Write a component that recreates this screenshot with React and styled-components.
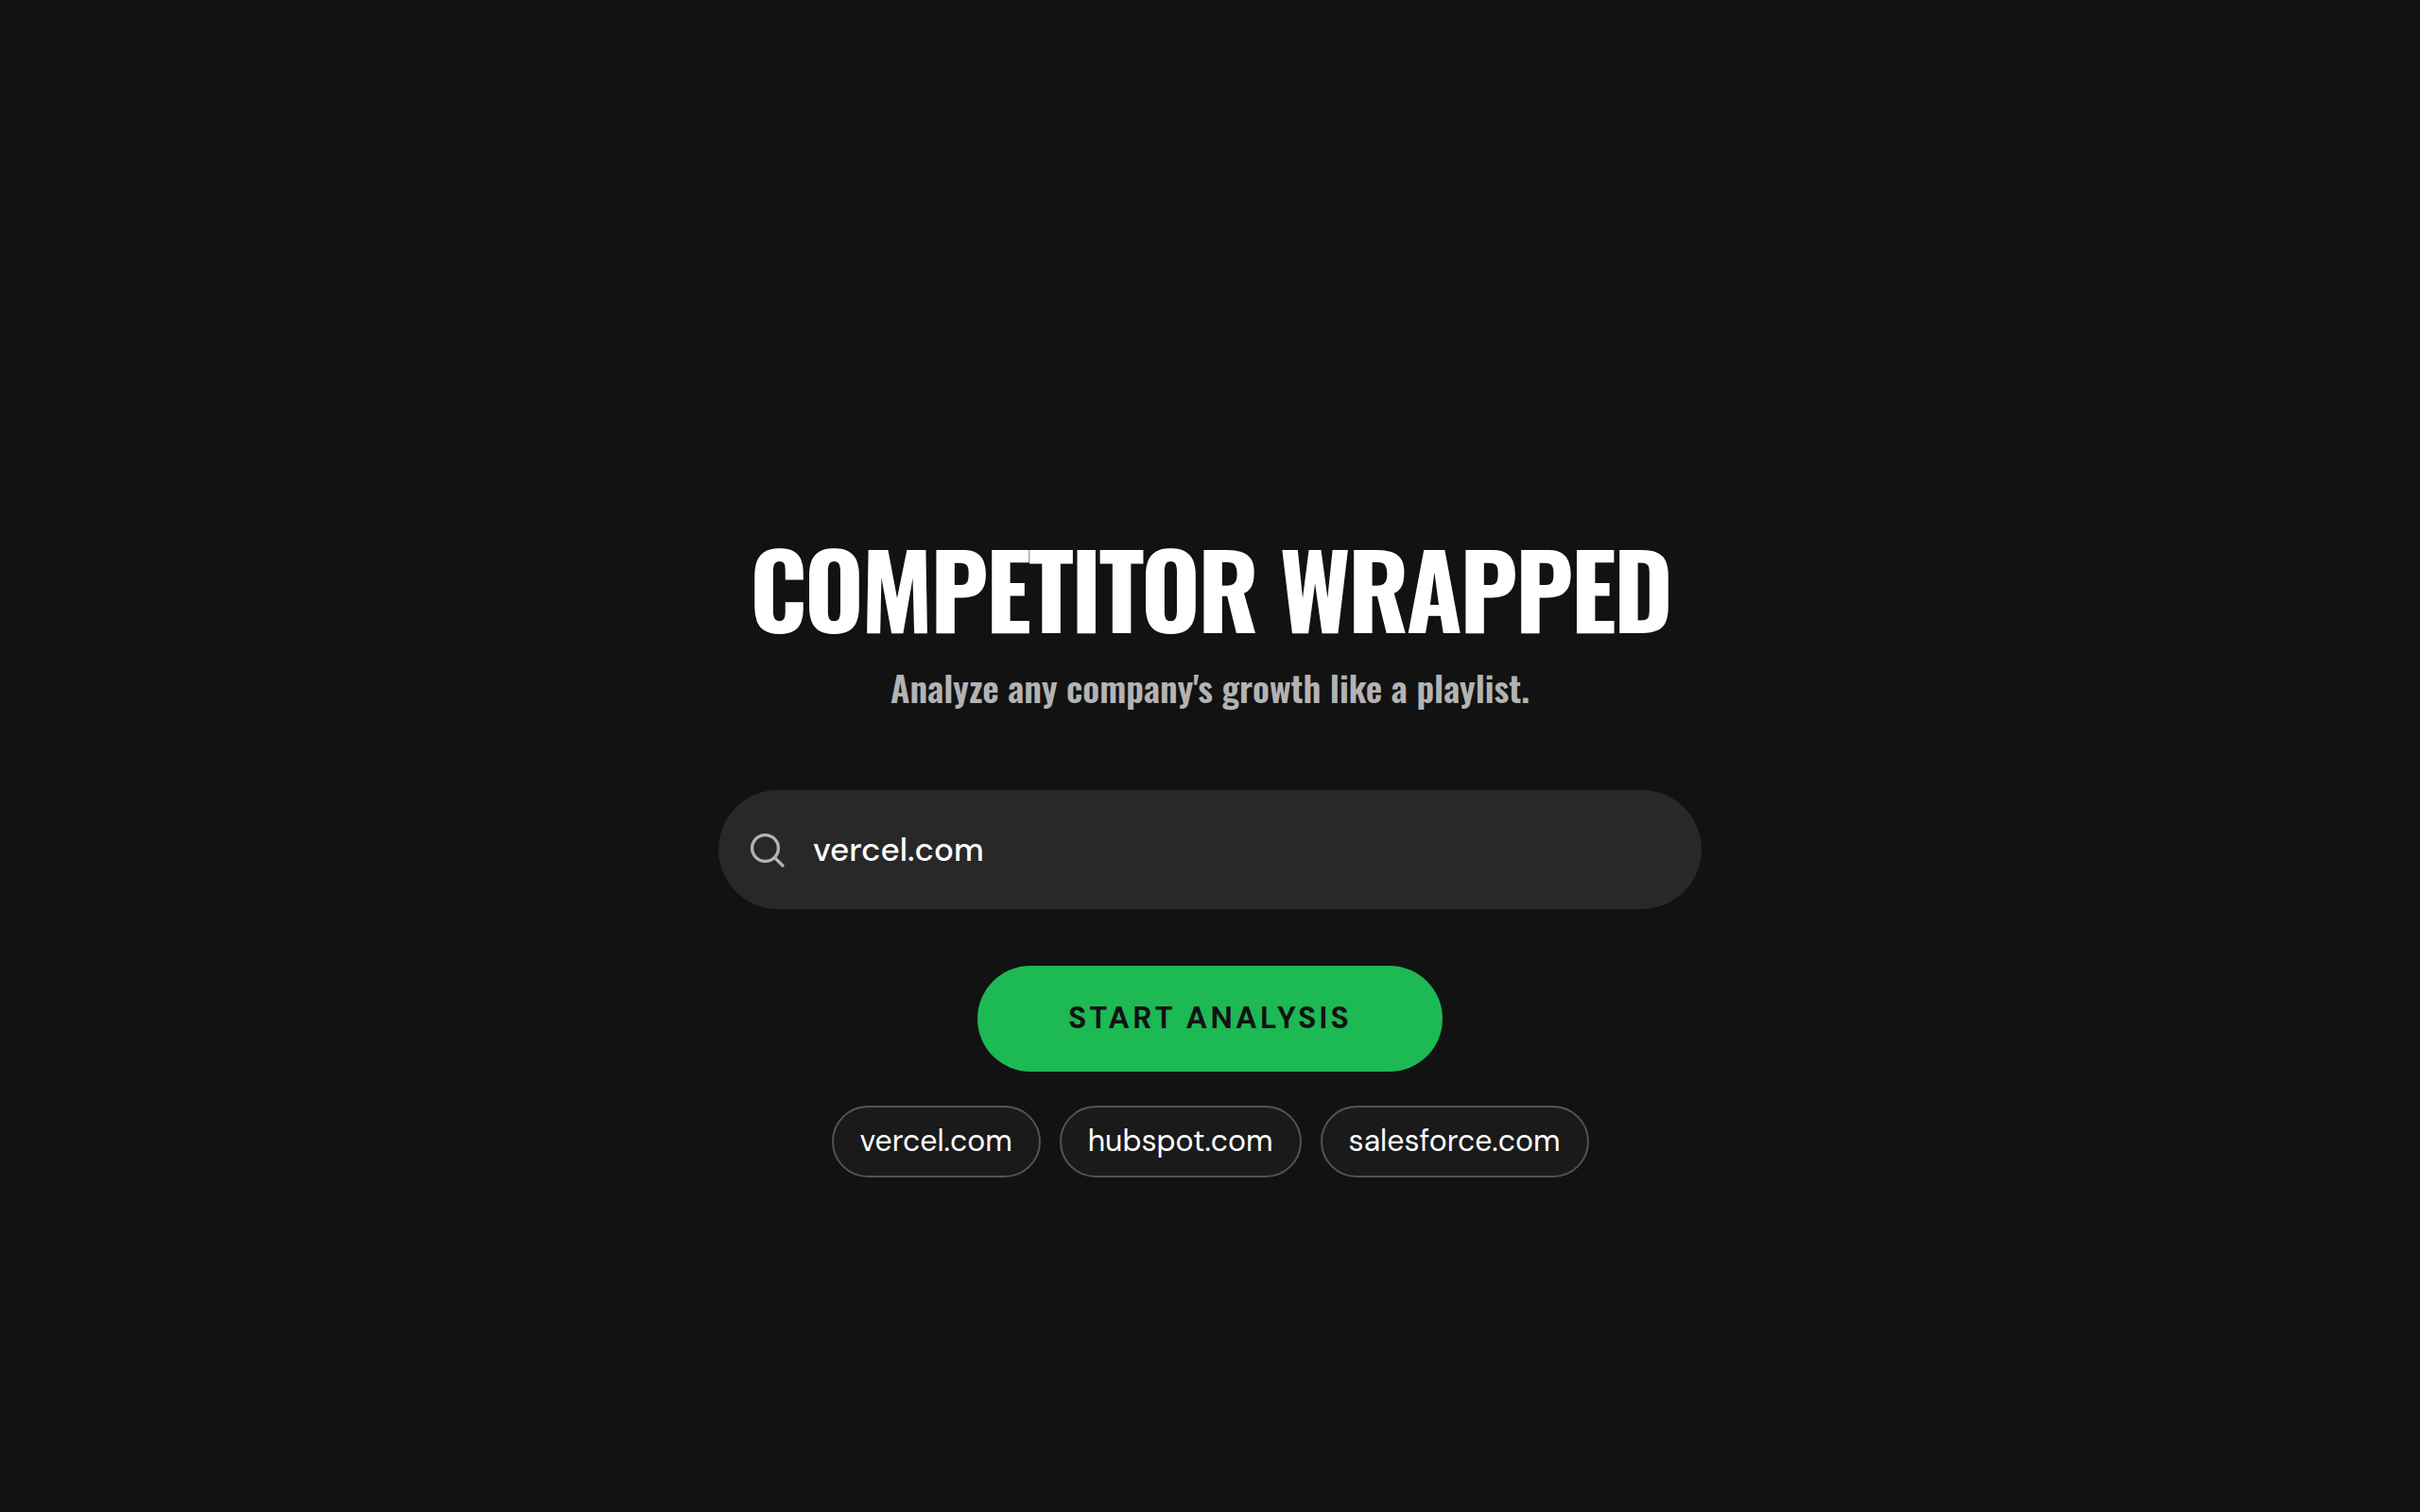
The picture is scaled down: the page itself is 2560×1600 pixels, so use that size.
import React, { useState } from "react";
import styled, { createGlobalStyle } from "styled-components";

const GlobalStyle = createGlobalStyle`
  * {
    box-sizing: border-box;
  }

  body {
    margin: 0;
    background: #121212;
    color: #ffffff;
    font-family: "DM Sans", "Open Sans", sans-serif;
  }
`;

const Page = styled.main`
  display: flex;
  flex-direction: column;
  align-items: center;
  justify-content: center;
  min-height: 100vh;
  padding: 214px 32px 0;
`;

const Title = styled.h1`
  margin: 0;
  font-family: "Oswald", "Roboto Condensed", sans-serif;
  font-size: 108px;
  font-weight: 700;
  line-height: 106px;
  letter-spacing: -3px;
  text-align: center;
  text-transform: uppercase;
`;

const Subtitle = styled.p`
  margin: 24px 0 0;
  color: #b3b3b3;
  font-family: "Oswald", "Roboto Condensed", sans-serif;
  font-size: 38px;
  font-weight: 600;
  line-height: 58px;
  text-align: center;
`;

const Form = styled.form`
  display: flex;
  flex-direction: column;
  align-items: center;
  gap: 60px;
  width: 100%;
  max-width: 1040px;
  margin-top: 80px;
`;

const SearchField = styled.label`
  display: flex;
  align-items: center;
  gap: 24px;
  width: 100%;
  padding: 40px 32px;
  border-radius: 63px;
  background: #282828;
  color: #b3b3b3;
`;

const SearchInput = styled.input`
  flex: 1;
  min-width: 0;
  height: 46px;
  padding: 0;
  border: 0;
  outline: 0;
  background: transparent;
  color: #ffffff;
  font-family: inherit;
  font-size: 35px;
  font-weight: 500;
  line-height: 46px;
`;

const StartButton = styled.button`
  padding: 32px 96px 34px;
  border: 0;
  border-radius: 56px;
  background: #1db954;
  color: #121212;
  font-family: inherit;
  font-size: 32px;
  font-weight: 700;
  line-height: 46px;
  letter-spacing: 0.1em;
  text-transform: uppercase;
  cursor: pointer;
`;

const Suggestions = styled.div`
  display: flex;
  flex-wrap: wrap;
  justify-content: center;
  gap: 20px;
  margin-top: 36px;
`;

const Chip = styled.button`
  padding: 12px 28px 14px;
  border: 2px solid #535353;
  border-radius: 38px;
  background: #1a1a1a;
  color: #ffffff;
  font-family: inherit;
  font-size: 32px;
  font-weight: 400;
  line-height: 46px;
  cursor: pointer;
`;

const SearchIcon = () => (
  <svg width="44" height="44" viewBox="0 0 44 44" fill="none" stroke="currentColor" strokeWidth="3.3" strokeLinecap="round" aria-hidden="true">
    <circle cx="17.5" cy="20.5" r="13.9" />
    <path d="M27.6 30.6l8.4 8.4" />
  </svg>
);

const domains = ["vercel.com", "hubspot.com", "salesforce.com"];

export default function App() {
  const [domain, setDomain] = useState("vercel.com");

  return (
    <>
      <GlobalStyle />
      <Page>
        <Title>Competitor Wrapped</Title>
        <Subtitle>Analyze any company's growth like a playlist.</Subtitle>
        <Form onSubmit={(event) => event.preventDefault()}>
          <SearchField>
            <SearchIcon />
            <SearchInput
              type="text"
              aria-label="Company domain"
              value={domain}
              onChange={(event) => setDomain(event.target.value)}
            />
          </SearchField>
          <StartButton type="submit">Start Analysis</StartButton>
        </Form>
        <Suggestions>
          {domains.map((name) => (
            <Chip key={name} type="button" onClick={() => setDomain(name)}>
              {name}
            </Chip>
          ))}
        </Suggestions>
      </Page>
    </>
  );
}
